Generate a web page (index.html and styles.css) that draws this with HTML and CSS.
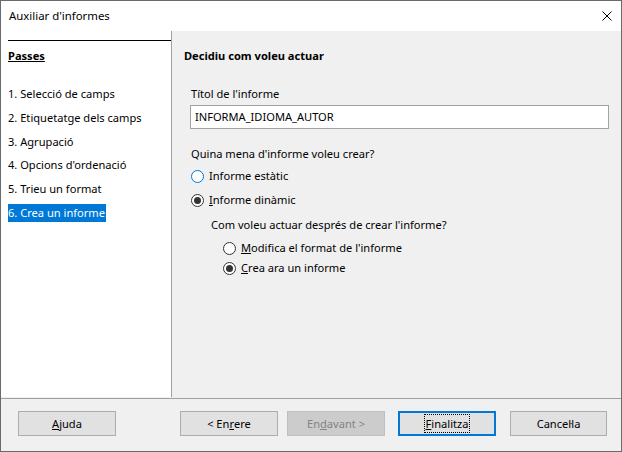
FILE: index.html
```html
<!DOCTYPE html>
<html lang="ca">
<head>
<meta charset="utf-8">
<title>Auxiliar d'informes</title>
<link rel="stylesheet" href="styles.css">
</head>
<body>
<div class="window">
  <div class="titlebar">
    <span class="title">Auxiliar d'informes</span>
    <svg class="close" width="10" height="10" viewBox="0 0 10 10"><path d="M0.5 0.5 L9.5 9.5 M9.5 0.5 L0.5 9.5" stroke="#000" stroke-width="1" fill="none"/></svg>
  </div>
  <div class="main">
    <div class="steps">
      <div class="rule"></div>
      <div class="steps-head">Passes</div>
      <ul class="step-list">
        <li class="step"><span>1. Selecció de camps</span></li>
        <li class="step"><span>2. Etiquetatge dels camps</span></li>
        <li class="step"><span>3. Agrupació</span></li>
        <li class="step"><span>4. Opcions d'ordenació</span></li>
        <li class="step"><span>5. Trieu un format</span></li>
        <li class="step"><span class="current">6. Crea un informe</span></li>
      </ul>
    </div>
    <div class="page">
      <div class="page-head">Decidiu com voleu actuar</div>
      <div class="label">Títol de l'informe</div>
      <div class="input">INFORMA_IDIOMA_AUTOR</div>
      <div class="question">Quina mena d'informe voleu crear?</div>
      <div class="radio r1"><span class="dot focus"></span><span>Informe estàtic</span></div>
      <div class="radio r2"><span class="dot on"></span><span><u>I</u>nforme dinàmic</span></div>
      <div class="sub-question">Com voleu actuar després de crear l'informe?</div>
      <div class="radio sub r3"><span class="dot"></span><span><u>M</u>odifica el format de l'informe</span></div>
      <div class="radio sub r4"><span class="dot on"></span><span><u>C</u>rea ara un informe</span></div>
    </div>
  </div>
  <div class="footer">
    <button class="btn help"><u>A</u>juda</button>
    <button class="btn back">&lt; En<u>r</u>ere</button>
    <button class="btn next" disabled>En<u>d</u>avant &gt;</button>
    <button class="btn finish"><span class="focusrect"><u>F</u>inalitza</span></button>
    <button class="btn cancel">Cancel·la</button>
  </div>
</div>
</body>
</html>
```
FILE: styles.css
```css
* { box-sizing: border-box; }
html, body { margin: 0; padding: 0; }
body {
  font-family: "Noto Sans", "Liberation Sans", sans-serif;
  font-size: 11.1px;
  line-height: 16px;
  color: #000;
  background: #fff;
}
.window {
  width: 622px;
  height: 452px;
  border: 1px solid #6a6a6a;
  background: #f0f0f0;
  display: flex;
  flex-direction: column;
}
.titlebar {
  height: 30px;
  background: #fff;
  display: flex;
  align-items: center;
  justify-content: space-between;
  padding: 0 9px 0 8px;
}
.title { line-height: 30px; font-size: 11.4px; }
.close { display: block; }
.main {
  height: 366px;
  display: flex;
}
.steps {
  width: 171px;
  background: #fff;
  border-right: 1px solid #a0a0a0;
  padding-top: 9px;
}
.rule {
  height: 1px;
  background: #000;
  margin-left: 7px;
}
.steps-head {
  font-weight: bold;
  text-decoration: underline;
  margin: 7px 0 0 7px;
}
.step-list {
  list-style: none;
  margin: 21px 0 0 0;
  padding: 0 0 0 7px;
}
.step {
  height: 18px;
  line-height: 18px;
  margin-bottom: 5.8px;
}
.step span { display: inline-block; }
.step .current {
  background: #0078d7;
  color: #fff;
  padding-right: 1px;
}
.page {
  flex: 1;
  padding: 17px 12px 0 12px;
}
.page-head { font-weight: bold; }
.label { margin: 22px 0 0 7px; }
.input {
  margin: 3px 0 0 6px;
  height: 24px;
  background: #fff;
  border: 1px solid #a3a3a3;
  line-height: 22px;
  padding-left: 4px;
}
.question { margin: 17px 0 0 7px; }
.radio {
  display: flex;
  align-items: center;
  height: 16px;
  margin-left: 7px;
}
.radio.sub { margin-left: 39px; }
.r1 { margin-top: 6px; }
.r2 { margin-top: 8px; }
.r3 { margin-top: 7px; }
.r4 { margin-top: 4px; }
.sub-question { margin: 9px 0 0 27px; }
.dot {
  width: 13px;
  height: 13px;
  border-radius: 50%;
  border: 1px solid #333;
  background: #fff;
  margin-right: 5px;
  flex: none;
  display: flex;
  align-items: center;
  justify-content: center;
}
.dot.focus { border-color: #0078d7; }
.dot.on::after {
  content: "";
  width: 7px;
  height: 7px;
  border-radius: 50%;
  background: #333;
}
.footer {
  flex: 1;
  margin-top: 1px;
  border-top: 1px solid #a0a0a0;
  padding: 12px 0 0 17px;
  display: flex;
  align-items: flex-start;
}
.btn {
  font: inherit;
  width: 98px;
  height: 25px;
  background: #e1e1e1;
  border: 1px solid #adadad;
  color: #000;
  padding: 0;
  margin: 0;
  display: flex;
  align-items: center;
  justify-content: center;
}
.back { margin-left: 64px; }
.next {
  margin-left: 9px;
  background: #cccccc;
  border-color: #bfbfbf;
  color: #838383;
}
.finish {
  margin-left: 13px;
  border: 2px solid #0078d7;
}
.focusrect {
  outline: 1px dotted #000;
  padding: 0 1px;
  line-height: 17px;
}
.cancel { margin-left: 14px; width: 97px; }
```
